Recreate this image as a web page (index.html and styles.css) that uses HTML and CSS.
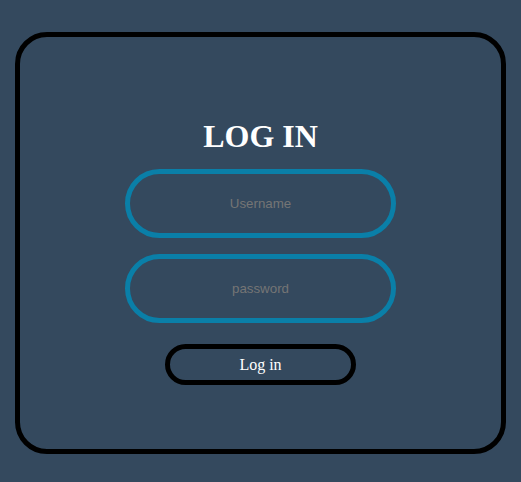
FILE: index.html
```html
<!DOCTYPE html>
<html>
<head>
<meta charset="utf-8">
<link rel="stylesheet" href="styles.css">
</head>
<body>
<div class="page">
  <form class="card">
    <h1 class="title">LOG IN</h1>
    <input class="field" type="text" placeholder="Username">
    <input class="field field-second" type="password" placeholder="password">
    <button class="btn" type="button">Log in</button>
  </form>
</div>
</body>
</html>
```
FILE: styles.css
```css
html, body {
  margin: 0;
  padding: 0;
  background: #34495e;
}
.page {
  padding: 32px 15px 28px;
}
.card {
  box-sizing: border-box;
  width: 491px;
  height: 422px;
  border: 5px solid #000;
  border-radius: 32px;
  display: flex;
  flex-direction: column;
  align-items: center;
  padding-top: 81px;
  margin: 0;
}
.title {
  margin: 0;
  font-family: "Liberation Serif", "Times New Roman", serif;
  font-size: 32px;
  font-weight: bold;
  line-height: 37px;
  color: #fff;
}
.field {
  box-sizing: border-box;
  width: 271px;
  height: 69px;
  margin-top: 14px;
  border: 5px solid #0a7fa8;
  border-radius: 35px;
  background: transparent;
  outline: none;
  text-align: center;
  font-family: "Liberation Sans", Arial, sans-serif;
  font-size: 13.33px;
  color: #fff;
  padding: 0;
}
.field::placeholder {
  color: #757575;
}
.field-second {
  margin-top: 16px;
}
.btn {
  box-sizing: border-box;
  width: 191px;
  height: 41px;
  margin-top: 21px;
  border: 5px solid #000;
  border-radius: 21px;
  background: transparent;
  color: #fff;
  font-family: "Liberation Serif", "Times New Roman", serif;
  font-size: 16px;
  padding: 0;
  cursor: pointer;
}
```
